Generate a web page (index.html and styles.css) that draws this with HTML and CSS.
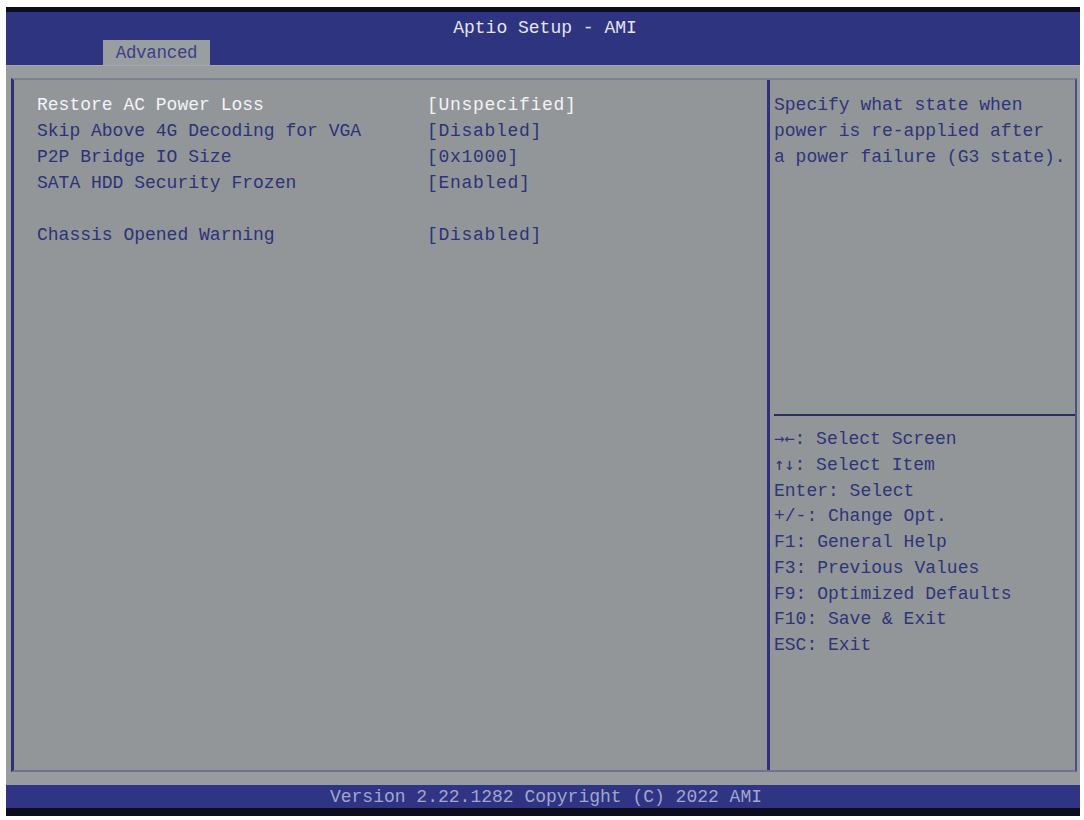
FILE: index.html
```html
<!DOCTYPE html>
<html lang="en">
<head>
<meta charset="utf-8">
<title>Aptio Setup - AMI</title>
<link rel="stylesheet" href="styles.css">
</head>
<body>
<div class="screen">
  <header class="header">
    <div class="title">Aptio Setup - AMI</div>
    <div class="tabs"><div class="tab">Advanced</div></div>
  </header>
  <main class="body">
    <div class="panel">
      <section class="settings">
        <div class="row selected"><span class="label">Restore AC Power Loss</span><span class="value">[Unspecified]</span></div>
        <div class="row"><span class="label">Skip Above 4G Decoding for VGA</span><span class="value">[Disabled]</span></div>
        <div class="row"><span class="label">P2P Bridge IO Size</span><span class="value">[0x1000]</span></div>
        <div class="row"><span class="label">SATA HDD Security Frozen</span><span class="value">[Enabled]</span></div>
        <div class="row blank"></div>
        <div class="row"><span class="label">Chassis Opened Warning</span><span class="value">[Disabled]</span></div>
      </section>
      <aside class="side">
        <div class="help">
          <div>Specify what state when</div>
          <div>power is re-applied after</div>
          <div>a power failure (G3 state).</div>
        </div>
        <div class="divider"></div>
        <div class="keys">
          <div class="key"><span class="arrows">→←</span>: Select Screen</div>
          <div class="key"><span class="arrows">↑↓</span>: Select Item</div>
          <div class="key">Enter: Select</div>
          <div class="key">+/-: Change Opt.</div>
          <div class="key">F1: General Help</div>
          <div class="key">F3: Previous Values</div>
          <div class="key">F9: Optimized Defaults</div>
          <div class="key">F10: Save &amp; Exit</div>
          <div class="key">ESC: Exit</div>
        </div>
      </aside>
    </div>
  </main>
  <footer class="footer">Version 2.22.1282 Copyright (C) 2022 AMI</footer>
</div>
</body>
</html>
```

FILE: styles.css
```css
html, body {
  margin: 0;
  padding: 0;
  background: #ffffff;
}
body {
  font-family: "Liberation Mono", "DejaVu Sans Mono", monospace;
  font-size: 18px;
}
.screen {
  margin: 7px 0 0 6px;
  width: 1074px;
  height: 809px;
  display: flex;
  flex-direction: column;
  background: #939799;
}
.header {
  border-top: 5px solid #0c0d1e;
  height: 53px;
  background: #2f3481;
  display: flex;
  flex-direction: column;
  justify-content: space-between;
}
.title {
  text-align: center;
  color: #e4e5f0;
  line-height: 20px;
  padding-top: 6px;
  padding-left: 4px;
}
.tabs {
  display: flex;
  padding-left: 97px;
}
.tab {
  width: 107px;
  height: 25px;
  box-sizing: border-box;
  background: #9a9ea1;
  color: #3b4088;
  text-align: center;
  line-height: 26px;
  font-size: 17.5px;
  letter-spacing: -0.3px;
}
.body {
  flex: 1;
  display: flex;
  flex-direction: column;
  padding: 12px 3px 13px 5px;
  background: #989c9f;
  border-top: 1px solid #a4a8ac;
}
.panel {
  flex: 1;
  display: flex;
  background: #929699;
  border-top: 2px solid #7d8196;
  border-bottom: 2px solid #6f7390;
  border-left: 3px solid #2e3275;
  border-right: 2px solid #4c5080;
}
.settings {
  flex: 1;
  padding: 12px 0 0 23px;
  border-right: 3px solid #2e3275;
}
.row {
  display: flex;
  height: 26px;
  line-height: 26px;
  color: #2d3278;
}
.row.selected {
  color: #f3f3f6;
}
.label {
  width: 390px;
  white-space: pre;
}
.value {
  white-space: pre;
  letter-spacing: 0.7px;
}
.side {
  width: 305px;
  display: flex;
  flex-direction: column;
}
.help {
  height: 322px;
  padding: 12px 0 0 4px;
  line-height: 26px;
  color: #2f3479;
}
.divider {
  margin-left: 4px;
  height: 2px;
  background: #2a2d62;
}
.keys {
  padding: 11px 0 0 4px;
  color: #2f3479;
}
.key {
  height: 25.75px;
  line-height: 25.75px;
  overflow: visible;
}
.arrows {
  font-family: "DejaVu Sans Mono", monospace;
  font-size: 17px;
  line-height: 1px;
}
.footer {
  height: 23px;
  border-bottom: 8px solid #0c0d1e;
  background: #2f3484;
  color: #a3a6cc;
  text-align: center;
  line-height: 24px;
  padding-left: 6px;
}
```
